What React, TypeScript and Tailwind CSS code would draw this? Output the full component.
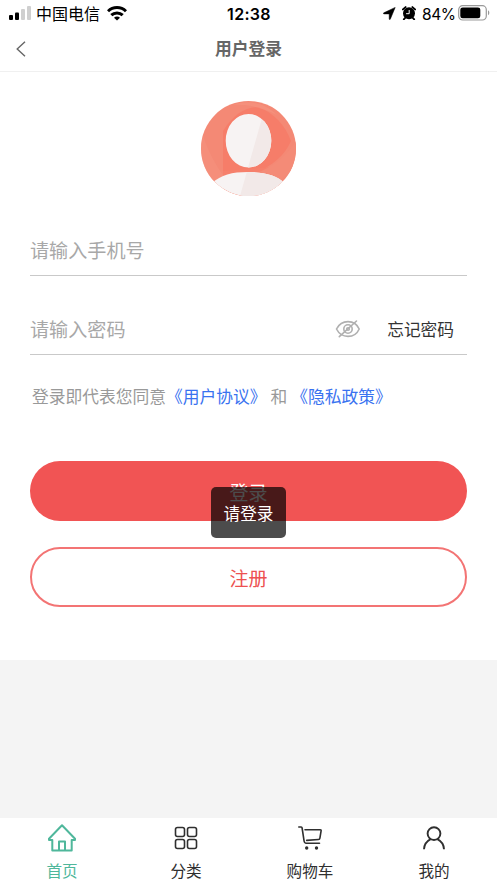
import React, { useState } from 'react';

type TabKey = 'home' | 'category' | 'cart' | 'mine';

function StatusBar() {
  return (
    <div className="relative flex h-[27px] shrink-0 items-center justify-between pl-[9px] pr-[7px] text-black">
      <div className="flex items-center">
        <svg className="-mt-px" width="22" height="14" viewBox="0 0 22 14" fill="#000">
          <rect x="0" y="9" width="4" height="5" rx="1" />
          <rect x="6" y="6.5" width="4" height="7.5" rx="1" />
          <rect x="12" y="3" width="4" height="11" rx="1" fill="#cfcfcf" />
          <rect x="18" y="0" width="4" height="14" rx="1" fill="#cfcfcf" />
        </svg>
        <span className="-mt-px ml-[5px] text-[16px] leading-none">中国电信</span>
        <svg className="ml-[7px]" width="20" height="15" viewBox="0 0 20 15" fill="none" stroke="#000" strokeWidth="3">
          <path d="M1 5.3C6 0.3 14 0.3 19 5.3" />
          <path d="M4.3 9.2C7.5 6.1 12.5 6.1 15.7 9.2" />
          <path d="M10 14.6L7 11.7C8.7 10.1 11.3 10.1 13 11.7Z" fill="#000" stroke="none" />
        </svg>
      </div>
      {/* Clock stays centred whatever the side groups measure */}
      <span className="absolute inset-x-0 pl-px text-center font-['Inter',sans-serif] text-[16px] font-semibold tracking-[0.3px]">
        12:38
      </span>
      <div className="flex items-center">
        <svg width="13" height="13" viewBox="0 0 13 13" fill="#000">
          <path d="M12.2 0.4L7.3 12.2C7 12.8 6.3 12.7 6.2 12.1V6.9H0.9C0.3 6.8 0.2 6.1 0.8 5.8Z" stroke="#000" strokeWidth="0.5" />
        </svg>
        <svg className="-mt-px ml-[6px]" width="14" height="14" viewBox="0 0 14 14" fill="none">
          <circle cx="7" cy="7.3" r="6" fill="#000" />
          <path d="M0.9 3.4L3.6 1.1M13.1 3.4L10.4 1.1M3.2 11.8L1.8 13.3M10.8 11.8L12.2 13.3" stroke="#000" strokeWidth="1.9" strokeLinecap="round" />
          <path d="M7.2 4V7.7H4.1" stroke="#fff" strokeWidth="1" />
        </svg>
        <span className="ml-[6px] mt-[2px] w-[33px] whitespace-nowrap font-['Inter',sans-serif] text-[15.5px] leading-none tracking-[-0.4px]">84%</span>
        <svg className="-mt-px ml-[3px]" width="32" height="16" viewBox="0 0 32 16">
          <rect x="0.7" y="0.7" width="27.6" height="14.3" rx="4" fill="none" stroke="#999" strokeWidth="1.2" />
          <rect x="2.3" y="2.5" width="20" height="10.7" rx="2.3" fill="#000" />
          <path d="M30 5.3C31.8 6.3 31.8 9.3 30 10.3Z" fill="#999" />
        </svg>
      </div>
    </div>
  );
}

function NavBar() {
  return (
    <div className="relative flex h-[45px] shrink-0 items-center justify-center border-b border-[#f0f0f0]">
      <button className="absolute left-[15px] top-[14px]" aria-label="返回">
        <svg width="12" height="16" viewBox="0 0 12 16" fill="none" stroke="#666" strokeWidth="1.4">
          <path d="M10 0.8L2.2 8L10 15.2" />
        </svg>
      </button>
      <h1 className="pb-px text-[16.75px] font-bold leading-none text-[#666]">用户登录</h1>
    </div>
  );
}

function Avatar() {
  return (
    <svg className="mx-auto shrink-0" width="95" height="95" viewBox="0 0 95 95">
      <defs>
        <clipPath id="disc">
          <circle cx="47.5" cy="47.5" r="47.5" />
        </clipPath>
        <clipPath id="person">
          <ellipse cx="47.5" cy="39.8" rx="22.8" ry="26.8" />
          <path d="M11 82C20 74 31 71 47 71C63 71 75 74 84 82V95H11Z" />
        </clipPath>
      </defs>
      <g clipPath="url(#disc)">
        <rect width="95" height="95" fill="#f48975" />
        <path d="M22 30C32 14 44 6 57 6C73 12 84 24 90 40C84 54 71 65 56 71L22 76Z" fill="#f67d69" />
        <path d="M0 28C6 48 14 64 25 78L9 84L0 60Z" fill="#f59380" opacity="0.5" />
        <path d="M22 70L72 66L88 95H22Z" fill="#f6806c" />
        <path d="M32 4C48 -2 64 2 76 14C60 6 45 3 32 4Z" fill="#f69a84" opacity="0.45" />
        <path d="M95 40C85 56 71 66 56 72L80 79L95 66Z" fill="#f48b77" />
        <g clipPath="url(#person)">
          <rect width="95" height="95" fill="#f7f3f3" />
          <path d="M63 10L39 95H95V10Z" fill="#f2e9e8" />
        </g>
      </g>
    </svg>
  );
}

function EyeOffIcon() {
  return (
    <svg className="-mt-[2px]" width="26" height="20" viewBox="0 0 26 20" fill="none" stroke="#b0b0b0" strokeWidth="1.6" strokeLinecap="round">
      <path d="M1.5 10C4 5 8 2.6 13 2.6S22 5 24.2 10C22 15 18 17.4 13 17.4S4 15 1.5 10Z" />
      <circle cx="13" cy="10" r="4.2" />
      <circle cx="13" cy="10" r="1.3" />
      <path d="M4.3 17.7L21.5 2" />
    </svg>
  );
}

function LoginForm() {
  const [phone, setPhone] = useState('');
  const [password, setPassword] = useState('');

  return (
    <div className="flex flex-col px-[30px]">
      <div className="mt-[30px] flex h-[50px] items-center border-b border-[#c9c9c9]">
        <input
          className="w-full bg-transparent text-[19.1px] text-[#333] outline-none placeholder:text-[#a8a8a8]"
          placeholder="请输入手机号"
          value={phone}
          onChange={(e) => setPhone(e.target.value)}
        />
      </div>
      <div className="mt-[29px] flex h-[50px] items-center border-b border-[#c9c9c9]">
        <input
          className="min-w-0 flex-1 bg-transparent text-[19.1px] text-[#333] outline-none placeholder:text-[#a8a8a8]"
          placeholder="请输入密码"
          type="password"
          value={password}
          onChange={(e) => setPassword(e.target.value)}
        />
        <EyeOffIcon />
        <span className="ml-[26px] mr-[13px] text-[16.7px] text-[#333]">忘记密码</span>
      </div>

      <p className="mt-[29px] whitespace-nowrap pl-[2px] text-[16.75px] leading-[24px] text-[#999]">
        登录即代表您同意
        <span className="text-[#3972f0]">《用户协议》</span>
        <span className="mx-[4px]">和</span>
        <span className="text-[#3972f0]">《隐私政策》</span>
      </p>

      <button className="mt-[53px] h-[60px] rounded-full bg-[#f15454] pt-[2px] text-[19px] text-white">登录</button>
      <button className="mt-[26px] h-[60px] rounded-full border-2 border-[#f37474] pt-[2px] text-[19px] text-[#ed5151]">
        注册
      </button>
    </div>
  );
}

function Toast({ message }: { message: string }) {
  return (
    <div className="absolute left-[211px] top-[487px] flex h-[51px] w-[75px] items-center justify-center rounded-[5px] bg-black/70 pt-[2px] text-[16.6px] text-white">
      {message}
    </div>
  );
}

function HomeIcon() {
  return (
    <svg width="28" height="28" viewBox="0 0 28 28" fill="none" stroke="currentColor" strokeWidth="2" strokeLinejoin="round">
      <path d="M14 1.3L1 14.7V16H4.3V26.5H23.7V16H27V14.7Z" />
      <path d="M11 26V17.5H17V26" />
    </svg>
  );
}

function CategoryIcon() {
  return (
    <svg width="24" height="24" viewBox="0 0 24 24" fill="none" stroke="currentColor" strokeWidth="1.6">
      <rect x="1.5" y="1.5" width="9" height="9" rx="2" />
      <rect x="13.5" y="1.5" width="9" height="9" rx="2" />
      <rect x="1.5" y="13.5" width="9" height="9" rx="2" />
      <rect x="13.5" y="13.5" width="9" height="9" rx="2" />
    </svg>
  );
}

function CartIcon() {
  return (
    <svg width="24" height="24" viewBox="0 0 24 24" fill="none" stroke="currentColor" strokeWidth="1.6" strokeLinecap="round" strokeLinejoin="round">
      <path d="M0.8 1H3.2C3.8 1 4 1.4 4.1 2L6.1 15.2C6.3 16.6 6.8 17.2 7.8 17.2H21.5" />
      <path d="M7 3.7H22.2C23 3.7 23.2 4.2 23.1 4.8L21.9 12.2C21.8 13 21.3 13.5 20.5 13.5L8.7 14.4" />
      <circle cx="8.7" cy="22" r="1.7" fill="currentColor" stroke="none" />
      <circle cx="18.5" cy="22" r="1.7" fill="currentColor" stroke="none" />
    </svg>
  );
}

function UserIcon() {
  return (
    <svg width="24" height="24" viewBox="0 0 24 24" fill="none" stroke="currentColor" strokeWidth="1.9">
      <circle cx="12" cy="7.6" r="6.4" />
      <path d="M2 23.3C2.2 18.4 4.4 15.4 8.6 13.2M22 23.3C21.8 18.4 19.6 15.4 15.4 13.2" />
    </svg>
  );
}

const tabs: { key: TabKey; label: string; icon: React.ReactNode }[] = [
  { key: 'home', label: '首页', icon: <HomeIcon /> },
  { key: 'category', label: '分类', icon: <CategoryIcon /> },
  { key: 'cart', label: '购物车', icon: <CartIcon /> },
  { key: 'mine', label: '我的', icon: <UserIcon /> },
];

function TabBar() {
  const [active, setActive] = useState<TabKey>('home');

  return (
    <nav className="grid h-[65px] shrink-0 grid-cols-4 bg-white pr-px">
      {tabs.map((tab) => (
        <button
          key={tab.key}
          onClick={() => setActive(tab.key)}
          className={`flex flex-col items-center pt-[5px] ${active === tab.key ? 'text-[#4fb79b]' : 'text-[#2f2f2f]'}`}
        >
          <span className="flex h-[29px] items-center">{tab.icon}</span>
          <span className="mt-[7px] text-[15.6px] leading-[22px]">{tab.label}</span>
        </button>
      ))}
    </nav>
  );
}

function App() {
  return (
    <div className="relative flex h-[883px] w-[497px] flex-col overflow-hidden bg-[#f4f4f4] font-['Noto_Sans_CJK_SC',sans-serif]">
      <div className="flex h-[660px] shrink-0 flex-col bg-white">
        <StatusBar />
        <NavBar />
        <div className="flex flex-col pt-[29px]">
          <Avatar />
          <LoginForm />
        </div>
      </div>
      <div className="flex-1" />
      <TabBar />
      <Toast message="请登录" />
    </div>
  );
}

export default App;
